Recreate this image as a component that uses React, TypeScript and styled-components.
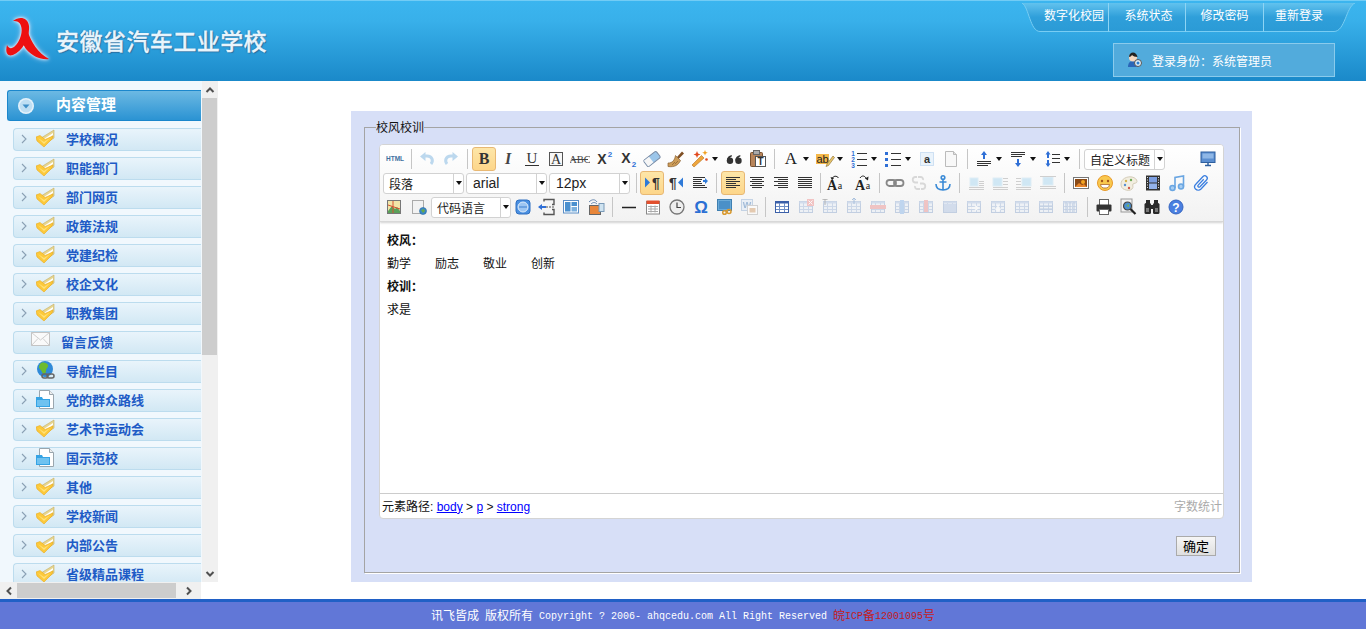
import React from 'react';
import styled, { createGlobalStyle } from 'styled-components';

const CJK = '"Noto Sans CJK SC", "Liberation Sans", sans-serif';

const Global = createGlobalStyle`
  html, body { margin: 0; height: 100%; overflow: hidden; background: #fff; }
  body { font-family: ${CJK}; font-size: 12px; color: #000; }
  * { box-sizing: border-box; }
`;

const Page = styled.div`display: flex; flex-direction: column; height: 100vh;`;

/* ---------- header ---------- */
const Header = styled.header`
  height: 81px; flex: none; display: flex; justify-content: space-between;
  border-top: 1px solid #72ccf5;
  background: linear-gradient(#3bb5ef, #38b0ea 25%, #1a89c9);
`;
const Brand = styled.div`display: flex; align-items: center; padding-bottom: 2px;`;
const Logo = styled.svg`width: 56px; height: 56px; flex: none; filter: drop-shadow(0 0 1.5px #fff) drop-shadow(0 0 2.5px #a8ccf2);`;
const Title = styled.h1`
  margin: 0; font-size: 23px; letter-spacing: .45px; font-weight: 500; line-height: 30px;
  color: #e9f5fc; -webkit-text-stroke: .3px #e9f5fc; text-shadow: 1px 1px 1px #2a6a9c, -1px 0 1px #2a78aa;
`;
const HeaderRight = styled.div`display: flex; flex-direction: column; align-items: flex-end; padding: 2px 11px 0 0;`;
const Nav = styled.nav`display: flex; height: 29px; color: #fff;`;
const NavEnd = styled.svg`display: block; height: 29px; flex: none;`;
const NavItem = styled.a<{ $w: number; $pl?: number; $line?: boolean }>`
  width: ${p => p.$w}px; padding-left: ${p => p.$pl ?? 0}px; text-align: center; line-height: 24px; font-size: 12px; color: #fff;
  background: linear-gradient(#62c2ee, #2f9fda 50%, #2b9bd6);
  border-bottom: 1px solid #78cdf3;
  border-right: ${p => (p.$line ? '1px solid #8ed4f4' : 'none')};
`;
const UserBox = styled.div`
  margin: 11px 20px 0 0; width: 222px; height: 34px; display: flex; align-items: center;
  padding-left: 13px; gap: 9px; color: #fff; background: #52abdc; border: 1px solid #8acbec;
`;

/* ---------- body ---------- */
const Body = styled.div`flex: 1; min-height: 0; display: flex;`;
const Side = styled.aside`width: 218px; flex: none; display: flex; flex-direction: column;`;
const SideTop = styled.div`flex: 1; min-height: 0; display: flex;`;
const MenuList = styled.div`
  width: 202px; flex: none; overflow: hidden; background: #f1f8fd;
  padding: 9px 1px 0 7px; display: flex; flex-direction: column;
`;
const MenuHead = styled.div`
  height: 31px; flex: none; display: flex; align-items: center; padding: 0 0 5px 10px; gap: 22px; margin-bottom: 7px;
  color: #fff; font-size: 15px; font-weight: 700;
  background: linear-gradient(#6cb9e3, #2b93d3);
  border: 1px solid #1b87cc; border-right: none; border-radius: 3px 0 0 3px;
  svg { margin-top: 5px; }
`;
const MenuItem = styled.a<{ $plain?: boolean }>`
  height: 23px; flex: none; margin: 0 0 6px 6px; display: flex; align-items: center;
  padding: 0 0 2px ${p => (p.$plain ? 17 : 7)}px;
  border: 1px solid #bcdcee; border-right: none; border-radius: 4px 0 0 4px;
  background: linear-gradient(#e9f4fb, #d2e8f4);
  color: #1e5bc6; font-size: 13px; font-weight: 700; white-space: nowrap; line-height: 18px;
`;
const Chevron = styled.svg`width: 6px; height: 10px; flex: none; margin: 0 9px 0 0;`;
const ItemIcon = styled.svg`width: 19px; height: 19px; flex: none; margin: -1px 11px 0 0;`;
const MailSvg = styled.svg`width: 19px; height: 14px; flex: none; margin: -6px 11px 0 0;`;
const VBar = styled.div`width: 16px; flex: none; background: #f0f0f0; display: flex; flex-direction: column;`;
const VThumb = styled.div`width: 15px; height: 257px; background: #cdcdcd;`;
const BarBtn = styled.div<{ $end?: boolean }>`
  width: 16px; height: 17px; flex: none; display: flex; align-items: center; justify-content: center;
  margin-top: ${p => (p.$end ? 'auto' : 0)};
`;
const HBar = styled.div`width: 201px; height: 17px; flex: none; background: #f0f0f0; display: flex; align-items: center;`;
const HThumb = styled.div`width: 159px; height: 15px; background: #cdcdcd;`;
const HBtn = styled.div<{ $w: number }>`width: ${p => p.$w}px; height: 17px; display: flex; align-items: center; justify-content: center;`;

const Main = styled.main`flex: 1; min-width: 0; padding: 30px 114px 17px 133px; display: flex;`;
const Panel = styled.section`flex: 1; min-width: 0; background: #d7dff7; padding: 9px 12px 9px 13px; display: flex;`;
const Field = styled.fieldset`
  flex: 1; min-width: 0; margin: 0; padding: 10px 15px 0 14px; border: 1px solid #a4a4a4; box-shadow: 1px 1px 0 #fff;
  display: flex; flex-direction: column;
`;
const Legend = styled.legend`padding: 0; margin-left: -3px; font-size: 12px; line-height: 14px; color: #111;`;

const Editor = styled.div`
  height: 375px; display: flex; flex-direction: column; background: #fff;
  border: 1px solid #d4d4d4; border-radius: 4px; overflow: hidden;
`;
const Toolbar = styled.div`
  height: 77px; flex: none; padding: 3px 3px 0; display: flex; flex-direction: column; gap: 2px;
  background: linear-gradient(#fff, #f2f2f2); border-bottom: 1px solid #d8d8d8; box-shadow: 0 1px 2px rgba(0,0,0,.18);
`;
const TRow = styled.div<{ $ml?: number }>`height: 22px; display: flex; align-items: center; margin-left: ${p => p.$ml ?? 0}px;`;
const Tool = styled.div<{ $on?: boolean; $auto?: boolean }>`
  width: 24px; height: 22px; flex: none; display: flex; align-items: center; justify-content: center;
  margin-left: ${p => (p.$auto ? 'auto' : 0)};
  ${p => p.$on && `&::before {
    content: ''; position: absolute; width: 22px; height: 22px; border: 1px solid #e8b873; border-radius: 3px;
    background: linear-gradient(#fde6a8, #fdd68a);
  }`}
  svg { position: relative; }
`;
const Split = styled.div`width: 34px; flex: none; display: flex; align-items: center;`;
const Caret = styled.i`
  width: 0; height: 0; flex: none; border: 3.5px solid transparent; border-top: 4px solid #111; border-bottom: none;
`;
const Sep = styled.span<{ $w: number; $blank?: boolean }>`
  width: ${p => p.$w}px; height: 20px; flex: none; display: flex; justify-content: center;
  &::after { content: ''; width: 1px; height: 100%; background: ${p => (p.$blank ? 'transparent' : '#c6c6c6')}; }
`;
const Pick = styled.div<{ $w: number; $mr?: number; $font?: string }>`
  width: ${p => p.$w}px; height: 21px; flex: none; margin-right: ${p => p.$mr ?? 0}px; display: flex; background: #fff;
  border: 1px solid #d2d2d2; border-radius: 3px; font-size: ${p => (p.$font ? 14 : 12)}px; color: #222;
  font-family: ${p => p.$font ?? CJK}; line-height: 19px;
`;
const PickText = styled.span<{ $pl: number }>`flex: 1; padding-left: ${p => p.$pl}px; white-space: nowrap; overflow: hidden;`;
const PickArrow = styled.span`
  width: 10px; flex: none; border-left: 1px solid #d2d2d2; display: flex; align-items: center; justify-content: center;
`;
const PickCaret = styled.i`width: 0; height: 0; border: 3px solid transparent; border-top: 4px solid #111; border-bottom: none;`;

const Content = styled.div`flex: 1; padding: 6px 7px 0; font-size: 12px; line-height: 23px; color: #111;`;
const Line = styled.p`margin: 0; white-space: pre;`;
const Status = styled.div`
  height: 25px; flex: none; display: flex; justify-content: space-between; align-items: center; padding: 0 1px 2px 2px;
  border-top: 1px solid #ccc; font-family: "Liberation Sans", ${CJK}; font-size: 12px; color: #111;
  a { color: #00f; text-decoration: underline; }
`;
const Count = styled.span`color: #aaa;`;
const Actions = styled.div`display: flex; justify-content: flex-end; padding: 17px 8px 0 0;`;
const Confirm = styled.button`
  width: 40px; height: 20px; padding: 0; border: 1px solid #aaa; font: 13px ${CJK}; line-height: 18px; color: #000;
  background: linear-gradient(#f6f6f6, #dfdfdf);
`;

const Footer = styled.footer`
  height: 30px; flex: none; background: #6177d7; border-top: 3px solid #2060c6; color: #fff;
  text-align: center; font-size: 12px; line-height: 25px; white-space: pre;
`;
const Mono = styled.span`font-family: "Liberation Mono", monospace; font-size: 10px; vertical-align: 1px;`;
const Red = styled.span`color: #c41c1c;`;

/* ---------- icons ---------- */
const S = '"Liberation Serif", serif';
const T = (p: { x?: number; y: number; s: number; c?: string; f?: string; w?: number; i?: boolean; children: string }) => (
  <text x={p.x ?? 10} y={p.y} fontSize={p.s} fill={p.c ?? '#333'} fontFamily={p.f ?? S} fontWeight={p.w ?? 400}
    fontStyle={p.i ? 'italic' : 'normal'} textAnchor="middle">{p.children}</text>
);
const Lines = ({ l, c = '#333' }: { l: number[][]; c?: string }) => (
  <g stroke={c} strokeWidth="1" fill="none">{l.map((a, i) => <path key={i} d={`M${a[0]} ${a[2]}.5H${a[1]}`} />)}</g>
);
const align = (kind: 'l' | 'c' | 'r' | 'j') => {
  const rows = [4, 6, 8, 10, 12, 14];
  const w = [14, 10, 14, 10, 14, 10];
  return <Lines l={rows.map((y, i) => {
    const n = kind === 'j' ? 14 : w[i];
    const x = kind === 'l' || kind === 'j' ? 3 : kind === 'r' ? 17 - n : 10 - n / 2;
    return [x, x + n, y];
  })} />;
};
const float = (x: number, y: number, w: number, h: number, l: number[][]) => (
  <g opacity=".6">
    <rect x={x} y={y} width={w} height={h} fill="#b5dcf2" stroke="#cde6f4" />
    <Lines c="#b4b4b4" l={l} />
  </g>
);
const table = (extra?: React.ReactNode, off = true) => (
  <g opacity={off ? .45 : 1}>
    <rect x="3.500" y="4.500" width="13" height="11" fill={off ? '#e6eef8' : '#fff'} stroke={off ? '#87a3cc' : '#3a5fa8'} />
    <rect x="3.500" y="4.500" width="13" height="2" fill={off ? '#a9c0e2' : '#3a5fa8'} />
    <path d="M7.500 6v9M12.500 6v9M4 9.500h12M4 12.500h12" stroke={off ? '#9db6da' : '#6f8fc6'} fill="none" strokeWidth="1" />
    {extra}
  </g>
);

const icons: Record<string, React.ReactNode> = {
  html: <T y={12} s={6.5} c="#3d6f9e" f='"Liberation Sans"' w={700}>HTML</T>,
  undo: <><path d="M14 15c2.500-3 1.500-8-4-8H7" fill="none" stroke="#bcd8ee" strokeWidth="3" /><path d="M8.500 3L3 7.500 8.500 12z" fill="#bcd8ee" /></>,
  redo: <g transform="matrix(-1 0 0 1 20 0)"><path d="M14 15c2.500-3 1.500-8-4-8H7" fill="none" stroke="#bcd8ee" strokeWidth="3" /><path d="M8.500 3L3 7.500 8.500 12z" fill="#bcd8ee" /></g>,
  bold: <T y={15} s={16} w={700}>B</T>,
  italic: <T y={15} s={16} i w={700} c="#444">I</T>,
  underline: <><T y={14} s={15} c="#333">U</T><path d="M3 16.500h14" stroke="#333" /></>,
  abox: <><rect x="3.500" y="3.500" width="13" height="13" fill="#f8f8f8" stroke="#555" /><T y={15} s={14}>A</T></>,
  strike: <><T y={14} s={10.5} c="#444">ABC</T><path d="M2 10.500h16" stroke="#444" /></>,
  sup: <><T x={8} y={15} s={14} w={700} f='"Liberation Sans"' c="#333">X</T><T x={16} y={8} s={8} w={700} f='"Liberation Sans"' c="#2f6fd6">2</T></>,
  sub: <><T x={8} y={14} s={14} w={700} f='"Liberation Sans"' c="#333">X</T><T x={16} y={18} s={8} w={700} f='"Liberation Sans"' c="#2f6fd6">2</T></>,
  eraser: <g transform="rotate(-38 10 10)"><rect x="2" y="6" width="16" height="8" rx="1.500" fill="#9cc6ea" stroke="#7c8ca4" /><rect x="2.500" y="6.500" width="6.500" height="7" fill="#f6f6f6" /></g>,
  brush: <><path d="M11 8l5-5.500 2 2-5.500 5.500z" fill="#7f4f24" /><path d="M2 14c4.500 0 6.500-2.500 7.500-7.500l5 5c-2 4.500-6 7-12.500 6z" fill="#cc9c58" stroke="#8a6030" strokeWidth=".7" /><path d="M6 16l3-3M9 15l3-3" stroke="#8a6030" strokeWidth=".7" /></>,
  magic: <><path d="M4 18l-2-2L11.500 6.500l2.500 2.500z" fill="#eea63c" stroke="#b56f20" strokeWidth=".6" /><path d="M7 2l1 2.500L10.500 5.500 8 6.500 7 9 6 6.500 3.500 5.500 6 4.500z" fill="#e2491e" /><path d="M15 1l.8 2 2 .8-2 .8-.8 2-.8-2-2-.8 2-.8z" fill="#f0a020" /><circle cx="16.500" cy="10.500" r="1.300" fill="#e2491e" /></>,
  quote: <g fill="#333"><circle cx="6" cy="11.800" r="3.200" /><path d="M2.800 11.500c0-3 2-5 5-5.500v1.500c-2 .5-2.300 2-2.300 4z" /><circle cx="14.500" cy="11.800" r="3.200" /><path d="M11.300 11.500c0-3 2-5 5-5.500v1.500c-2 .5-2.300 2-2.300 4z" /></g>,
  paste: <><rect x="2.500" y="3.500" width="12" height="14" rx="1" fill="#b8855a" stroke="#7a5230" /><rect x="5.500" y="1.500" width="6" height="4" fill="#aaa" stroke="#666" /><rect x="7.500" y="7.500" width="10" height="10" fill="#fff" stroke="#555" /><T x={12.500} y={16} s={10} w={700} f='"Liberation Sans"'>T</T></>,
  fontA: <T y={15} s={17} c="#222">A</T>,
  mark: <><rect x="1" y="5" width="13" height="10" fill="#f4b84a" /><T x={7.500} y={14} s={11} f='"Liberation Sans"' c="#222">ab</T><path d="M12 15l6-8 1.500 1.500-6 8-2.500 1z" fill="#e8c66a" stroke="#8a6a30" strokeWidth=".6" /></>,
  ol: <><T x={4} y={7} s={6.500} w={700} f='"Liberation Sans"' c="#2f6fd6">1</T><T x={4} y={13} s={6.500} w={700} f='"Liberation Sans"' c="#2f6fd6">2</T><T x={4} y={19} s={6.500} w={700} f='"Liberation Sans"' c="#2f6fd6">3</T><Lines l={[[8, 18, 4], [8, 18, 10], [8, 18, 16]]} /></>,
  ul: <><g fill="#2f6fd6"><rect x="2" y="3" width="3" height="3" /><rect x="2" y="9" width="3" height="3" /><rect x="2" y="15" width="3" height="3" /></g><Lines l={[[8, 18, 4], [8, 18, 10], [8, 18, 16]]} /></>,
  abox2: <><rect x="3.500" y="3.500" width="13" height="13" fill="#eaf3fb" stroke="#a9c9ea" strokeDasharray="1 1" /><T y={14} s={11} w={700} f='"Liberation Sans"'>a</T></>,
  page: <><path d="M4.500 2.500h8l3 3v12h-11z" fill="#f8f8f8" stroke="#bbb" /><path d="M12.500 2.500v3h3" fill="#e0e0e0" stroke="#bbb" /></>,
  rowTop: <><path d="M10 2l3 4h-2v4H9V6H7z" fill="#2f6fd6" /><Lines l={[[3, 17, 12], [3, 17, 14], [3, 14, 16]]} /></>,
  rowBot: <><Lines l={[[3, 17, 3], [3, 17, 5], [3, 14, 7]]} /><path d="M10 18l3-4h-2v-4H9v4H7z" fill="#2f6fd6" /></>,
  lineH: <><path d="M6 2l2.500 3.500H7V9H5V5.500H3.500zM6 18l2.500-3.500H7V11H5v3.500H3.500z" fill="#2f6fd6" /><Lines l={[[10, 18, 5], [10, 18, 9], [10, 18, 13]]} /></>,
  full: <><rect x="3" y="3" width="14" height="10.500" fill="#5b8ed0" stroke="#2e5f9e" /><rect x="4.500" y="4.500" width="11" height="5" fill="#8fb7e6" /><path d="M7 16.500h6M10 14v2" stroke="#2e5f9e" strokeWidth="1.500" /></>,
  ltr: <><path d="M3 4.500l5 5-5 5z" fill="#2f7ad8" /><T x={14} y={15} s={14} c="#333" w={700} f='"Liberation Sans"'>¶</T></>,
  rtl: <><T x={7} y={15} s={14} c="#333" w={700} f='"Liberation Sans"'>¶</T><path d="M17 4.500l-5 5 5 5z" fill="#2f7ad8" /></>,
  indent: <><Lines l={[[3, 15, 4], [3, 12, 6], [3, 11, 8], [3, 12, 10], [3, 15, 12], [3, 17, 14]]} /><path d="M13 7h2V5l3 3-3 3V9h-2z" fill="#2f7ad8" /></>,
  left: align('l'), center: align('c'), right: align('r'), justify: align('j'),
  upper: <><T x={7} y={17} s={14} w={700} c="#222">A</T><T x={15} y={16} s={10} c="#222">a</T><path d="M7 6c1-3.500 5-3.500 6.500-1" fill="none" stroke="#222" /><path d="M5.500 4l1.500 3.500 2-2.500z" fill="#222" /></>,
  lower: <><T x={7} y={17} s={14} w={700} c="#222">A</T><T x={15} y={16} s={10} c="#222">a</T><path d="M7 5c2-3 5-2.500 6.500 1" fill="none" stroke="#222" /><path d="M15.500 3.500l-.5 4-3-2z" fill="#222" /></>,
  link: <g fill="none" stroke="#888" strokeWidth="1.800"><rect x="1.500" y="7" width="9.500" height="6" rx="3" /><rect x="9" y="7" width="9.500" height="6" rx="3" /></g>,
  unlink: <g fill="none" stroke="#d8d8d8" strokeWidth="1.800"><path d="M8 4H6a2.800 2.800 0 0 0 0 5.500h3" /><path d="M12 16h2a2.800 2.800 0 0 0 0-5.500h-3" /><path d="M9 4h3a2.500 2.500 0 0 1 2 3M11 16H8a2.500 2.500 0 0 1-2-3" /></g>,
  anchor: <g fill="none" stroke="#3a8ad6" strokeWidth="1.600"><circle cx="10" cy="4.500" r="1.800" /><path d="M10 6.500V17M6.500 9h7M3 11c0 4 3 6 7 6s7-2 7-6" /></g>,
  fl1: float(4, 5, 8, 8, [[13, 18, 8], [13, 18, 10], [13, 18, 12], [3, 18, 14], [3, 18, 16]]),
  fl2: float(3, 5, 9, 8, [[13, 18, 5], [13, 18, 8], [13, 18, 11], [3, 18, 14], [3, 18, 16]]),
  fl3: float(8, 5, 9, 8, [[2, 7, 5], [2, 7, 8], [2, 7, 11], [2, 17, 14], [2, 17, 16]]),
  fl4: float(5, 4, 10, 8, [[2, 18, 3], [2, 18, 13], [2, 18, 15]]),
  image: <><rect x="2.500" y="4.500" width="15" height="11" fill="#fff" stroke="#777" /><rect x="4" y="6" width="12" height="8" fill="#8a4a16" /><circle cx="12" cy="9" r="2" fill="#f5a623" /><path d="M4 14l4-4 3 2 2-1 3 3z" fill="#e8862a" /></>,
  emoji: <><circle cx="10" cy="10" r="7.500" fill="#f9c84e" stroke="#e89a2a" /><circle cx="7" cy="8" r="1.200" fill="#a4561a" /><circle cx="13" cy="8" r="1.200" fill="#a4561a" /><path d="M5.500 11.500h9c-.5 3-2.500 3.500-4.500 3.500s-4-.5-4.500-3.500z" fill="#fff" stroke="#a4561a" strokeWidth=".7" /></>,
  palette: <><path d="M2 11c0-5 6-8 11-7 3 .6 5 2.500 5 4.500s-3 1.500-4 2.500 1 3-1 5-5 1.500-7.500.5S2 14 2 11z" fill="#f2eee0" stroke="#d4ccb8" /><circle cx="7" cy="8" r="1.200" fill="#d4b44a" /><circle cx="12" cy="7" r="1.200" fill="#6faa58" /><circle cx="6" cy="12" r="1.200" fill="#5a8fd0" /><circle cx="10" cy="15" r="1.200" fill="#d05a4a" /></>,
  video: <><rect x="3" y="2.500" width="14" height="15" fill="#333" /><rect x="6" y="4" width="8" height="5.500" fill="#7c9ee0" /><rect x="6" y="10.500" width="8" height="5.500" fill="#93b2ea" /><path d="M4.500 4v12M15.500 4v12" stroke="#ddd" strokeDasharray="1 1.500" /></>,
  music: <g fill="none" stroke="#6aa6e2" strokeWidth="1.600"><circle cx="5.500" cy="15" r="2.500" fill="#a6cdf2" /><circle cx="14" cy="13.500" r="2.500" fill="#a6cdf2" /><path d="M8 15V4.500l8.500-1.500v10.500" /></g>,
  clip: <path d="M15.500 9l-6.500 7c-1.500 1.500-4 1.500-5.500 0s-1-3.500.5-5l7-7.500c1-1 2.500-1 3.500 0s1 2.500 0 3.500l-6.500 6.800c-.5.5-1.300.5-1.800 0s-.5-1.200 0-1.700l5.500-5.800" fill="none" stroke="#3b7fe0" strokeWidth="1.300" />,
  map: <><rect x="3.500" y="3.500" width="13" height="13" fill="#f2e6a8" stroke="#777" /><path d="M4 14l4-5 3 3 2-2 3 4v2H4z" fill="#5aa05a" /><path d="M9 4v12M4 8l12 4" stroke="#d85030" /></>,
  web: <><rect x="3.500" y="3.500" width="11" height="13" fill="#f2f2f2" stroke="#aaa" /><circle cx="14" cy="14" r="3.500" fill="#3a88c8" stroke="#2a6a9e" strokeWidth=".6" /><path d="M12 13l3-1 1 2-2 2z" fill="#6aaa4a" /></>,
  bluebtn: <><rect x="3" y="3" width="14" height="14" rx="3" fill="#4a90e2" stroke="#2e6fc0" /><circle cx="10" cy="10" r="5" fill="#9ec6f2" stroke="#dcebfb" /><path d="M6 10h8" stroke="#3a7fd0" strokeWidth="1.200" /></>,
  pagebreak: <><path d="M7 4.500V2.500h10v5h-2M7 15.500v2h10v-5h-2" fill="none" stroke="#555" strokeWidth="1.400" /><path d="M1 10l4-3v2h4v2H5v2z" fill="#2f6fd6" /><path d="M9 10h9" stroke="#555" strokeDasharray="2 1" /></>,
  tpl: <><rect x="2.500" y="3.500" width="15" height="12.500" fill="#fff" stroke="#5b8ec6" /><rect x="4" y="5" width="5.500" height="9.500" fill="#4a90cf" /><rect x="10.500" y="5" width="5.500" height="4" fill="#4a90cf" /><rect x="10.500" y="10" width="5.500" height="4.500" fill="#7bb0de" /></>,
  bg: <><path d="M3 5c3-3 6-3 8 0M5 7c2-2 4-2 6 0" fill="none" stroke="#6a8ab0" /><rect x="3.500" y="8.500" width="11" height="9" fill="#e8863a" stroke="#666" /><rect x="13" y="6.500" width="5" height="8" fill="#cfe3f0" stroke="#7a9ab8" /></>,
  hr: <path d="M3 10.500h14" stroke="#222" strokeWidth="1.300" />,
  date: <><rect x="3.500" y="4.500" width="13" height="12.500" fill="#fff" stroke="#888" /><rect x="3.500" y="3.500" width="13" height="3.500" fill="#e2502e" /><path d="M5 9.500h10M5 12h10M5 14.500h10M8 8.500v7M12 8.500v7" stroke="#aaa" /></>,
  clock: <><circle cx="10" cy="10" r="7" fill="#eee" stroke="#777" strokeWidth="1.300" /><path d="M10 5.500V10.500H14" fill="none" stroke="#444" strokeWidth="1.200" /></>,
  omega: <T y={16} s={17} w={700} c="#2b6fd4" f='"Liberation Sans"'>Ω</T>,
  snap: <><rect x="2.500" y="2.500" width="14" height="11" fill="#6aaad8" stroke="#3f7fb0" /><rect x="4" y="4" width="11" height="8" fill="#4a90c8" /><circle cx="14" cy="14.500" r="2" fill="none" stroke="#d99a30" strokeWidth="1.500" /><circle cx="9.500" cy="15.500" r="1.800" fill="none" stroke="#d99a30" strokeWidth="1.500" /><path d="M11 14.500l2-1" stroke="#d99a30" strokeWidth="1.500" /></>,
  word: <g opacity=".55"><rect x="2.500" y="2.500" width="11" height="11" fill="#dfeaf6" stroke="#9cb8d8" /><T x={8} y={11} s={9} w={700} c="#5a8ac0" f='"Liberation Sans"'>W</T><rect x="8.500" y="8.500" width="10" height="9" fill="#fff" stroke="#b5b5b5" /><rect x="10.500" y="11" width="6" height="4.500" fill="#d8a87a" /></g>,
  t0: table(undefined, false),
  t1: table(<g><rect x="11" y="2" width="7" height="7" fill="#e88" /><path d="M12.500 3.500l4 4M16.500 3.500l-4 4" stroke="#fff" /></g>),
  t2: table(<T x={5} y={8} s={9} f='"Liberation Sans"' c="#555">T</T>),
  t3: table(<path d="M10 1v6M8 3l2-2 2 2" stroke="#4a7fc0" fill="none" />),
  t4: table(<rect x="2" y="8" width="16" height="4" fill="#e98a8a" />),
  t5: table(<rect x="8" y="3" width="4" height="14" fill="#7fb0e8" />),
  t6: table(<rect x="8" y="3" width="4" height="12" fill="#e98a8a" />),
  t7: table(<rect x="4" y="7" width="12" height="8" fill="#a9c0e2" />),
  t8: table(<path d="M6 11h7M11 8.500l3 2.500-3 2.500" stroke="#fff" strokeWidth="1.500" fill="none" />),
  t9: table(<path d="M10 8v6M7.500 11.500l2.500 2.500 2.500-2.500" stroke="#fff" strokeWidth="1.500" fill="none" />),
  t10: table(),
  t11: table(<path d="M4 9h12M4 12h12" stroke="#7a9ac8" />),
  t12: table(<path d="M6 5v10M10 5v10M14 5v10" stroke="#7a9ac8" />),
  print: <><rect x="5.500" y="2.500" width="9" height="6" fill="#fff" stroke="#666" /><rect x="2.500" y="7.500" width="15" height="7" rx="1" fill="#333" /><rect x="5.500" y="12.500" width="9" height="5" fill="#fff" stroke="#666" /></>,
  preview: <><rect x="3" y="2" width="11" height="13" fill="#f2f2f2" stroke="#999" /><circle cx="9.500" cy="9" r="4" fill="#4a90cf" stroke="#444" strokeWidth="1.200" /><path d="M8 9l3-2v3z" fill="#78b058" /><path d="M12.500 12l5 5" stroke="#222" strokeWidth="2.200" /></>,
  search: <g fill="#2a2a2a"><rect x="2.500" y="6" width="6.500" height="11" rx="1.500" /><rect x="11" y="6" width="6.500" height="11" rx="1.500" /><rect x="4" y="3" width="4" height="4" /><rect x="12" y="3" width="4" height="4" /><rect x="8" y="8" width="4" height="4" /><rect x="4" y="11" width="3" height="4" fill="#777" /><rect x="13" y="11" width="3" height="4" fill="#777" /></g>,
  help: <><circle cx="10" cy="10" r="7" fill="#4a7fe0" stroke="#3565c0" /><T y={14.500} s={12} w={700} c="#fff" f='"Liberation Sans"'>?</T></>,
};

const Ico = ({ n }: { n: string }) => <svg width="20" height="20" viewBox="0 0 20 20" aria-hidden="true">{icons[n]}</svg>;

type Part =
  | { k: 'b'; n: string; on?: boolean; auto?: boolean }
  | { k: 'c'; n: string }
  | { k: 's'; w: number; blank?: boolean }
  | { k: 'p'; w: number; t: string; mr?: number; font?: string };

const b = (n: string, on?: boolean): Part => ({ k: 'b', n, on });
const c = (n: string): Part => ({ k: 'c', n });
const s = (w: number, blank?: boolean): Part => ({ k: 's', w, blank });
const ARIAL = '"Liberation Sans", sans-serif';

const row1: Part[] = [
  b('html'), s(8), b('undo'), b('redo'), s(9), b('bold', true), b('italic'), b('underline'), b('abox'), b('strike'), b('sup'), b('sub'),
  b('eraser'), b('brush'), c('magic'), b('quote'), b('paste'), s(9), c('fontA'), c('mark'), c('ol'), c('ul'), b('abox2'), b('page'), s(9),
  c('rowTop'), c('rowBot'), c('lineH'), s(10), { k: 'p', w: 81, t: '自定义标题' }, { k: 'b', n: 'full', auto: true },
];
const row2: Part[] = [
  { k: 'p', w: 81, t: '段落', mr: 2 }, { k: 'p', w: 81, t: 'arial', mr: 2, font: ARIAL }, { k: 'p', w: 81, t: '12px', mr: 2, font: ARIAL }, s(8),
  b('ltr', true), b('rtl'), b('indent'), s(9), b('left', true), b('center'), b('right'), b('justify'), s(6),
  b('upper'), s(4, true), b('lower'), s(8), b('link'), b('unlink'), b('anchor'), s(9), b('fl1'), b('fl2'), b('fl3'), b('fl4'), s(9),
  b('image'), b('emoji'), b('palette'), b('video'), b('music'), s(1, true), b('clip'),
];
const row3: Part[] = [
  b('map'), s(1, true), b('web'), { k: 'p', w: 80, t: '代码语言' }, b('bluebtn'), b('pagebreak'), b('tpl'), s(1, true), b('bg'), s(9),
  b('hr'), b('date'), b('clock'), b('omega'), b('snap'), b('word'), s(9),
  b('t0'), b('t1'), b('t2'), b('t3'), b('t4'), b('t5'), b('t6'), b('t7'), b('t8'), b('t9'), b('t10'), b('t11'), b('t12'), s(10),
  b('print'), b('preview'), b('search'), b('help'),
];

const renderPart = (p: Part, i: number) => {
  switch (p.k) {
    case 'b': return <Tool key={i} $on={p.on} $auto={p.auto}><Ico n={p.n} /></Tool>;
    case 'c': return <Split key={i}><Tool><Ico n={p.n} /></Tool><Caret /></Split>;
    case 's': return <Sep key={i} $w={p.w} $blank={p.blank} />;
    case 'p': return (
      <Pick key={i} $w={p.w} $mr={p.mr} $font={p.font}>
        <PickText $pl={p.font ? 6 : 5}>{p.t}</PickText>
        <PickArrow><PickCaret /></PickArrow>
      </Pick>
    );
  }
};

/* ---------- menu icons ---------- */
const FolderIcon = () => (
  <ItemIcon viewBox="0 0 19 19">
    <path d="M5 9L18 1v8l-9 6z" fill="#e6d692" stroke="#c8ae62" strokeWidth=".6" />
    <path d="M8 10l9-6v2l-8 6z" fill="#fff" />
    <path d="M0 8l4-1.500 5 4 8-3.500-1 3-8 8L1 12z" fill="#fcc93a" stroke="#eba91c" strokeWidth=".6" />
    <path d="M2 9l6 4 6-4-6 6z" fill="#ffe27a" />
  </ItemIcon>
);
const GlobeIcon = () => (
  <ItemIcon viewBox="0 0 19 19">
    <circle cx="9" cy="8" r="8" fill="#2f8ad8" />
    <path d="M5 2c3-1 6 0 7 2s-2 3-2 6-3 4-4 1-3-3-3-5 1-3 2-4z" fill="#6dbb2e" />
    <rect x="6" y="13" width="6" height="4" rx="2" fill="none" stroke="#666" strokeWidth="1.500" />
    <rect x="11" y="13" width="7" height="4" rx="2" fill="none" stroke="#666" strokeWidth="1.500" />
  </ItemIcon>
);
const PageIcon = () => (
  <ItemIcon viewBox="0 0 19 19">
    <path d="M3.500.5h10l4 4v14h-14z" fill="#fff" stroke="#9aa6ae" />
    <path d="M13.500.5v4h4" fill="#eee" stroke="#9aa6ae" />
    <path d="M0 7h6l1 2h7v8H0z" fill="#35a3e4" />
    <rect x="1" y="10" width="12" height="6" fill="#6fc2f0" />
  </ItemIcon>
);
const MailIcon = () => (
  <MailSvg viewBox="0 0 19 14">
    <rect x=".5" y=".5" width="18" height="13" fill="#fafafa" stroke="#c4c4c4" />
    <path d="M.5.5L9.500 8l9-7.500M.5 13.500L7 6.500M18.500 13.500L12 6.500" fill="none" stroke="#cfcfcf" />
  </MailSvg>
);
const Arrow = () => (
  <Chevron viewBox="0 0 6 10"><path d="M1 1l4 4-4 4" fill="none" stroke="#8aa0b4" strokeWidth="1.100" /></Chevron>
);

type Kind = 'folder' | 'globe' | 'page' | 'mail';
const menu: [string, Kind][] = [
  ['学校概况', 'folder'], ['职能部门', 'folder'], ['部门网页', 'folder'], ['政策法规', 'folder'], ['党建纪检', 'folder'],
  ['校企文化', 'folder'], ['职教集团', 'folder'], ['留言反馈', 'mail'], ['导航栏目', 'globe'], ['党的群众路线', 'page'],
  ['艺术节运动会', 'folder'], ['国示范校', 'page'], ['其他', 'folder'], ['学校新闻', 'folder'], ['内部公告', 'folder'], ['省级精品课程', 'folder'],
];
const kindIcon = { folder: <FolderIcon />, globe: <GlobeIcon />, page: <PageIcon />, mail: <MailIcon /> };

const Tri = ({ d }: { d: string }) => (
  <svg width="10" height="10" viewBox="0 0 10 10"><path d={d} fill="none" stroke="#505050" strokeWidth="2" /></svg>
);

export default function App() {
  return (
    <Page>
      <Global />
      <Header>
        <Brand>
          <Logo viewBox="0 12 56 56">
            <path fill="#ee1010" d="M13 21C19 16 28 17 29 26 30 37 23 51 13 55 7 57 5 52 7 45 9 49 12 49 15 46 20 41 23 32 21 26 20 22 17 21 13 21Z" />
            <path fill="#ee1010" d="M28 32C31 42 38 53 49 59 41 60 33 57 26 49 24 46 23 44 23 42 26 38 27 36 28 32Z" />
          </Logo>
          <Title>安徽省汽车工业学校</Title>
        </Brand>
        <HeaderRight>
          <Nav>
            <NavEnd width="18" viewBox="0 0 18 29">
              <defs><linearGradient id="navL" x1="0" y1="0" x2="0" y2="1"><stop offset="0" stopColor="#62c2ee" /><stop offset=".5" stopColor="#2f9fda" /><stop offset="1" stopColor="#2b9bd6" /></linearGradient></defs>
              <path d="M0 0C7 4 8 28.500 18 28.500V0Z" fill="url(#navL)" />
              <path d="M0 0C7 4 8 28.500 18 28.500" fill="none" stroke="#78cdf3" />
            </NavEnd>
            <NavItem $w={69} $line>数字化校园</NavItem>
            <NavItem $w={77} $pl={3} $line>系统状态</NavItem>
            <NavItem $w={78} $line>修改密码</NavItem>
            <NavItem $w={70}>重新登录</NavItem>
            <NavEnd width="21" viewBox="0 0 21 29">
              <path d="M21 0C12 4 11 28.500 0 28.500V0Z" fill="url(#navL)" />
              <path d="M21 0C12 4 11 28.500 0 28.500" fill="none" stroke="#78cdf3" />
            </NavEnd>
          </Nav>
          <UserBox>
            <svg width="16" height="16" viewBox="0 0 16 16" aria-hidden="true">
              <path d="M1 15c0-4 2-6 5-6s5 2 5 6z" fill="#2a66b8" />
              <circle cx="6" cy="5.500" r="4" fill="#f6d8c0" />
              <path d="M2 5c0-3 2-4.500 4-4.500S10 2 10.500 5C8 5 6 4 5 3 4.500 4 3 5 2 5z" fill="#222" />
              <circle cx="11" cy="11" r="3.500" fill="#dfeefa" stroke="#555" />
              <circle cx="11" cy="11" r="1.500" fill="#2a7fd0" />
            </svg>
            登录身份：系统管理员
          </UserBox>
        </HeaderRight>
      </Header>
      <Body>
        <Side>
          <SideTop>
            <MenuList>
              <MenuHead>
                <svg width="16" height="16" viewBox="0 0 16 16" aria-hidden="true">
                  <circle cx="8" cy="8" r="8" fill="#e4f2fb" />
                  <circle cx="8" cy="8" r="6.500" fill="#bfdff3" />
                  <path d="M4.500 6.500h7L8 10.500z" fill="#3e8fc8" />
                </svg>
                内容管理
              </MenuHead>
              {menu.map(([label, kind]) => (
                <MenuItem key={label} $plain={kind === 'mail'}>
                  {kind !== 'mail' && <Arrow />}
                  {kindIcon[kind]}
                  {label}
                </MenuItem>
              ))}
            </MenuList>
            <VBar>
              <BarBtn><Tri d="M1.500 7L5 3.500 8.500 7" /></BarBtn>
              <VThumb />
              <BarBtn $end><Tri d="M1.500 3L5 6.500 8.500 3" /></BarBtn>
            </VBar>
          </SideTop>
          <HBar>
            <HBtn $w={17}><Tri d="M7 1.500L3.500 5 7 8.500" /></HBtn>
            <HThumb />
            <HBtn $w={25}><Tri d="M3 1.500L6.500 5 3 8.500" /></HBtn>
          </HBar>
        </Side>
        <Main>
          <Panel>
            <Field>
              <Legend>校风校训</Legend>
              <Editor>
                <Toolbar>
                  <TRow>{row1.map(renderPart)}</TRow>
                  <TRow>{row2.map(renderPart)}</TRow>
                  <TRow $ml={-1}>{row3.map(renderPart)}</TRow>
                </Toolbar>
                <Content>
                  <Line><strong>校风：</strong></Line>
                  <Line>勤学　　励志　　敬业　　创新</Line>
                  <Line><strong>校训：</strong></Line>
                  <Line>求是</Line>
                </Content>
                <Status>
                  <span>元素路径: <a>body</a> &gt; <a>p</a> &gt; <a>strong</a></span>
                  <Count>字数统计</Count>
                </Status>
              </Editor>
              <Actions><Confirm>确定</Confirm></Actions>
            </Field>
          </Panel>
        </Main>
      </Body>
      <Footer>
        讯飞皆成<Mono> </Mono>版权所有<Mono> Copyright ? 2006- ahqcedu.com All Right Reserved </Mono>
        <Red>皖<Mono>ICP</Mono>备<Mono>12001095</Mono>号</Red>
      </Footer>
    </Page>
  );
}
